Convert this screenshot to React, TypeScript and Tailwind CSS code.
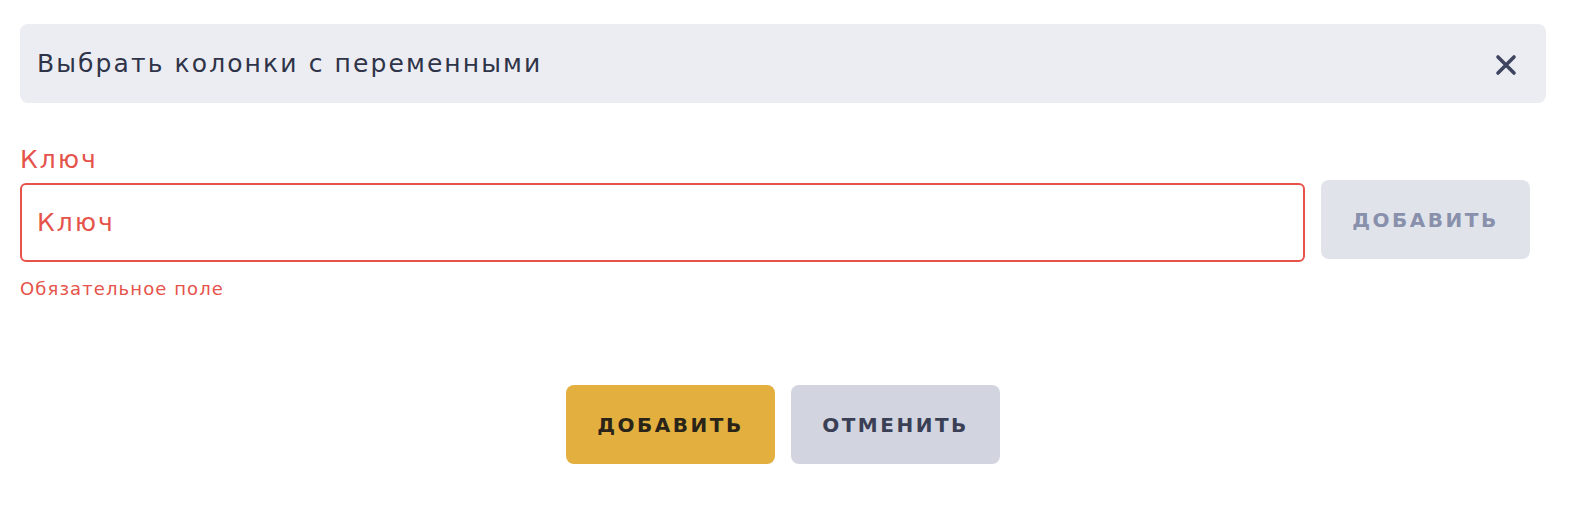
import React from "react";

export default function App() {
  const font = { fontFamily: '"DejaVu Sans", "Noto Sans", sans-serif' };
  return (
    <div className="w-[1578px] h-[510px] bg-white" style={font}>
      <div className="ml-5 pt-6 w-[1526px]">
        <div className="h-[79px] rounded-lg bg-[#ecedf2] flex items-center justify-between pl-[17px] pr-[29px]">
          <span className="text-[25px] tracking-[2.1px] text-[#2f3448] mt-[1px]">Выбрать колонки с переменными</span>
          <svg width="22" height="22" viewBox="0 0 22 22" className="mt-[2px]">
            <path d="M3 3 L19 19 M19 3 L3 19" stroke="#3f4560" strokeWidth="3.6" strokeLinecap="round" />
          </svg>
        </div>
        <div className="mt-[41px] text-[25px] tracking-[2.1px] leading-[32px] text-[#e5534b]">Ключ</div>
        <div className="mt-[4px] flex items-start gap-4">
          <div className="w-[1285px] shrink-0 h-[79px] rounded-md border-2 border-[#e5534b] flex items-center pl-[15px] mt-[3px]">
            <span className="text-[25px] tracking-[2.1px] text-[#e5534b]">Ключ</span>
          </div>
          <button className="w-[209px] shrink-0 h-[79px] rounded-lg bg-[#e1e3ea] text-[#8890ab] font-bold text-[20px] tracking-[2.5px]">
            ДОБАВИТЬ
          </button>
        </div>
        <div className="mt-[13px] text-[18px] tracking-[1.1px] text-[#e5534b]">Обязательное поле</div>
        <div className="mt-[83px] flex justify-center gap-4">
          <button className="w-[209px] h-[79px] rounded-lg bg-[#e3b03f] text-[#2a2418] font-bold text-[20px] tracking-[2.5px]">
            ДОБАВИТЬ
          </button>
          <button className="w-[209px] h-[79px] rounded-lg bg-[#d2d5e0] text-[#3a3f55] font-bold text-[20px] tracking-[2.5px]">
            ОТМЕНИТЬ
          </button>
        </div>
      </div>
    </div>
  );
}
